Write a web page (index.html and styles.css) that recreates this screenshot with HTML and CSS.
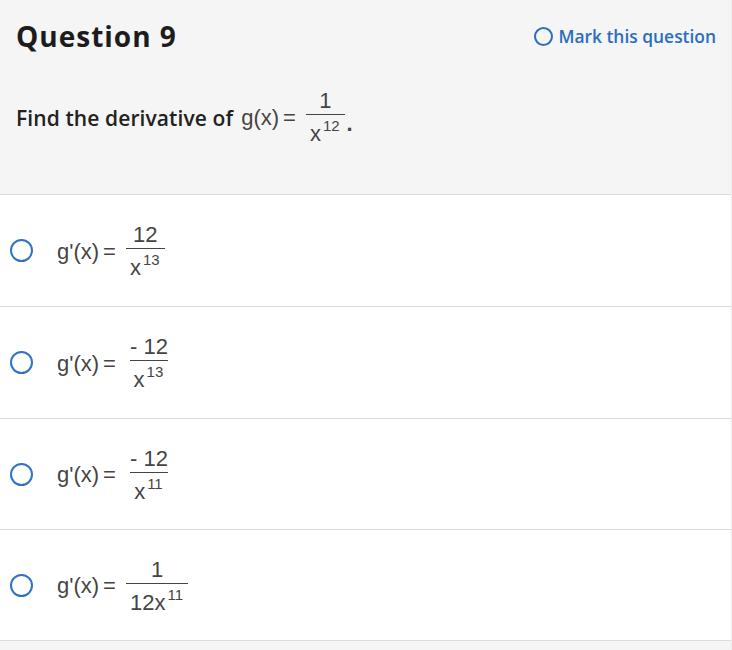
FILE: index.html
```html
<!DOCTYPE html>
<html>
<head>
<meta charset="utf-8">
<link rel="stylesheet" href="styles.css">
</head>
<body>
<div class="page">
  <div class="header">
    <div class="top">
      <h1 class="title">Question 9</h1>
      <a class="mark"><span class="mark-circle"></span>Mark this question</a>
    </div>
    <div class="prompt">
      <span class="prompt-text">Find the derivative of</span>
      <span class="math"><span class="fn">g</span>(<span class="var">x</span>)<span class="eq">=</span><span class="frac"><span class="num">1</span><span class="den"><span class="var">x</span><sup>12</sup></span></span><span class="dot">.</span></span>
    </div>
  </div>
  <div class="options">
    <div class="option tall">
      <span class="radio"></span>
      <span class="math"><span class="fn">g</span>'(<span class="var">x</span>)<span class="eq">=</span><span class="frac"><span class="num">12</span><span class="den"><span class="var">x</span><sup>13</sup></span></span></span>
    </div>
    <div class="option tall">
      <span class="radio"></span>
      <span class="math"><span class="fn">g</span>'(<span class="var">x</span>)<span class="eq">=</span><span class="frac"><span class="num">- 12</span><span class="den"><span class="var">x</span><sup>13</sup></span></span></span>
    </div>
    <div class="option">
      <span class="radio"></span>
      <span class="math"><span class="fn">g</span>'(<span class="var">x</span>)<span class="eq">=</span><span class="frac"><span class="num">- 12</span><span class="den"><span class="var">x</span><sup>11</sup></span></span></span>
    </div>
    <div class="option">
      <span class="radio"></span>
      <span class="math"><span class="fn">g</span>'(<span class="var">x</span>)<span class="eq">=</span><span class="frac"><span class="num">1</span><span class="den">12<span class="var">x</span><sup>11</sup></span></span></span>
    </div>
  </div>
  <div class="footer"></div>
</div>
</body>
</html>
```
FILE: styles.css
```css
html, body {
  margin: 0;
  padding: 0;
  background: #ffffff;
}
.page {
  width: 731px;
  border-right: 1px solid #ececec;
  font-family: "Open Sans", "Liberation Sans", sans-serif;
  color: #1f1f1f;
}
.header {
  background: #f5f5f5;
  height: 195px;
  border-bottom: 1px solid #dcdcd8;
  padding: 0 16px;
  box-sizing: border-box;
}
.top {
  display: flex;
  justify-content: space-between;
  align-items: center;
  padding-top: 18px;
}
.title {
  margin: 0;
  font-size: 28px;
  font-weight: 700;
  line-height: 36px;
  letter-spacing: 1px;
  color: #1c1c1c;
}
.mark {
  display: flex;
  align-items: center;
  gap: 5px;
  color: #2a6ebf;
  font-weight: 600;
  font-size: 17.4px;
  margin-right: -1px;
}
.mark-circle {
  width: 15px;
  height: 15px;
  border: 2px solid #2a6ebf;
  border-radius: 50%;
}
.prompt {
  display: flex;
  align-items: center;
  gap: 8px;
  margin-top: 36px;
  font-size: 21px;
  font-weight: 600;
}
.prompt-text {
  color: #222;
  letter-spacing: 0.1px;
}
.math {
  display: inline-flex;
  align-items: center;
  font-family: "Liberation Sans", Arial, sans-serif;
  font-weight: 400;
  font-size: 22px;
  color: #444;
}
.eq {
  margin: 0 10px 0 4px;
}
.frac {
  display: inline-flex;
  flex-direction: column;
  align-items: center;
}
.num {
  line-height: 22px;
  padding: 0 4px 2px;
}
.den {
  border-top: 1px solid #444;
  line-height: 22px;
  padding: 8px 5px 0 4px;
}
.den sup {
  font-size: 15px;
  vertical-align: 10px;
  line-height: 0;
  margin-left: 2px;
}
.dot {
  font-weight: 700;
  margin-left: 2px;
  margin-top: 12px;
}
.options {
  background: #ffffff;
}
.option {
  height: 111px;
  border-bottom: 1px solid #dcdcd8;
  display: flex;
  align-items: center;
  padding-left: 10px;
  gap: 24px;
  box-sizing: border-box;
}
.option.tall {
  height: 112px;
}
.option .math {
  margin-top: 2px;
}
.radio {
  width: 19px;
  height: 19px;
  border: 2px solid #2f72c9;
  border-radius: 50%;
}
.footer {
  background: #f5f5f5;
  height: 10px;
}
```
